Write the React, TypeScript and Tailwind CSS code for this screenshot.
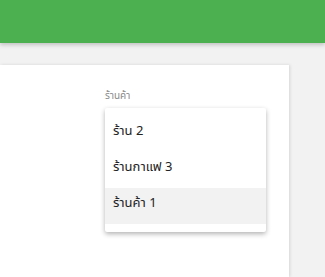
import React from 'react';

const stores = ['ร้าน 2', 'ร้านกาแฟ 3', 'ร้านค้า 1'];

export default function App() {
  const selected = 'ร้านค้า 1';
  return (
    <div className="w-[325px] h-[277px] bg-[#f2f2f2] overflow-hidden flex flex-col" style={{ fontFamily: '"Segoe UI", "Noto Sans", "Noto Sans Thai", Tahoma, sans-serif' }}>
      <div className="h-[43px] bg-[#4caf50] shrink-0 shadow-[0_2px_4px_rgba(0,0,0,0.2)] relative z-10" />
      <div className="flex-1 pt-[22px] pr-[36px]">
        <div className="bg-white h-full shadow-[1px_0_3px_rgba(0,0,0,0.12)] pl-[105px] pt-[24px]">
          <div className="text-[10px] leading-[12px] text-[#8a8a8a]">ร้านค้า</div>
          <div className="mt-[7px] w-[161px] bg-white py-[8px] shadow-[0_2px_5px_rgba(0,0,0,0.3)] rounded-[2px]">
            {stores.map((s) => (
              <div
                key={s}
                className={`h-[36px] flex items-center px-[8px] pb-[6px] text-[13px] text-[#222] ${s === selected ? 'bg-[#f2f2f2]' : ''}`}
              >
                {s}
              </div>
            ))}
          </div>
        </div>
      </div>
    </div>
  );
}
